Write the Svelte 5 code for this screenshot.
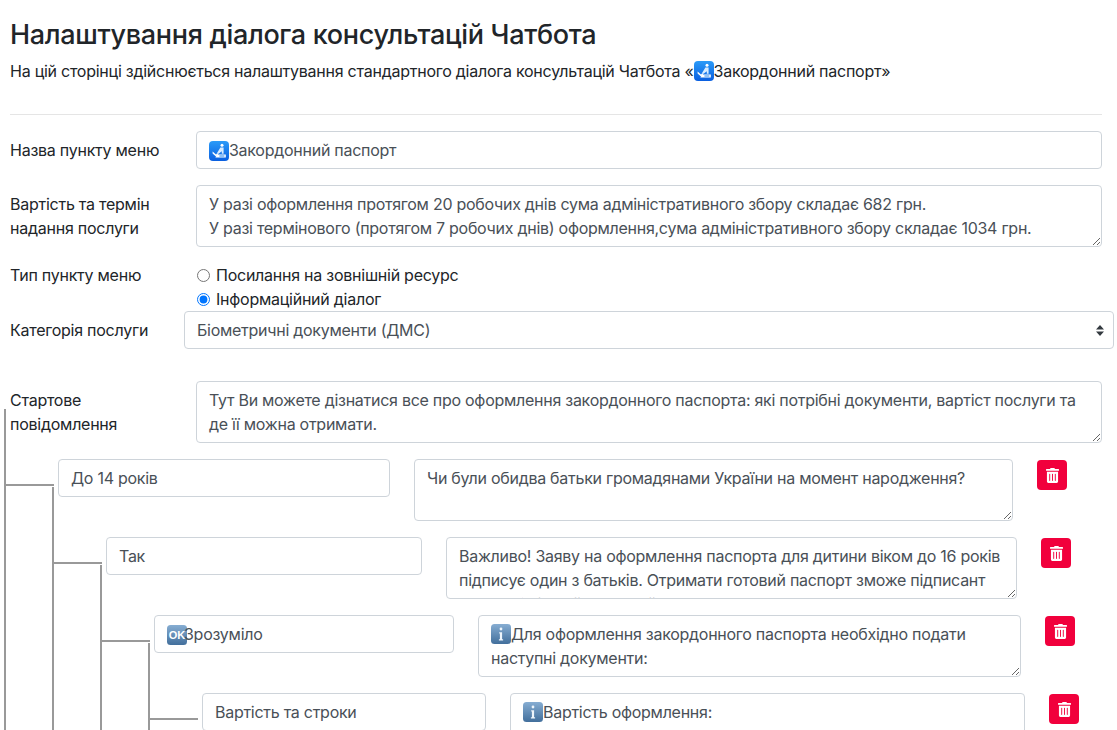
<script lang="ts">
  let menuType = $state('dialog');

  let tree = $state([
    {
      id: 1,
      title: 'До 14 років',
      text: 'Чи були обидва батьки громадянами України на момент народження?',
      children: [
        {
          id: 2,
          title: 'Так',
          text: 'Важливо! Заяву на оформлення паспорта для дитини віком до 16 років підписує один з батьків. Отримати готовий паспорт зможе підписант заяви або інший законний представник дитини.',
          children: [
            {
              id: 3,
              title: 'Зрозуміло',
              titleIcon: 'ok',
              text: 'Для оформлення закордонного паспорта необхідно подати наступні документи:',
              textIcon: 'info',
              children: [
                {
                  id: 4,
                  title: 'Вартість та строки',
                  text: 'Вартість оформлення:',
                  textIcon: 'info',
                  children: []
                }
              ]
            }
          ]
        }
      ]
    }
  ]);

  const priceText =
    'У разі оформлення протягом 20 робочих днів сума адміністративного збору складає 682 грн.\nУ разі термінового (протягом 7 робочих днів) оформлення,сума адміністративного збору складає 1034 грн.';
  const startText =
    'Тут Ви можете дізнатися все про оформлення закордонного паспорта: які потрібні документи, вартіст послуги та де її можна отримати.';

  function dropNode(nodes, id) {
    return nodes
      .filter((n) => n.id !== id)
      .map((n) => ({ ...n, children: dropNode(n.children, id) }));
  }

  function removeNode(id) {
    tree = dropNode(tree, id);
  }
</script>

{#snippet passport(cls)}
  <svg class={cls} viewBox="0 0 20 20" width="20" height="20" aria-hidden="true">
    <defs>
      <linearGradient id="pass-bg" x1="0" y1="0" x2="0" y2="1">
        <stop offset="0" stop-color="#2b9bf8" />
        <stop offset="1" stop-color="#0a5fe0" />
      </linearGradient>
    </defs>
    <rect width="20" height="20" rx="4" fill="url(#pass-bg)" />
    <circle cx="13" cy="4.2" r="1.5" fill="#fff" />
    <path d="M11.4 6.4h3.2v6.4h-1.8v-2.6l-3.2 2.6H7.6z" fill="#d8ecff" />
    <path d="M3.6 10.6l3.4 3 1.2-1.2 1 1-2.2 2.2-3.4-3z" fill="#fff" />
    <path d="M8 13.6h8.8v2.8H6.4z" fill="#fff" />
    <path d="M10.4 14.4h5v1.2h-5z" fill="#4a9bf0" />
  </svg>
{/snippet}

{#snippet badge(kind)}
  <svg class="emoji" viewBox="0 0 20 20" width="20" height="20" aria-hidden="true">
    <defs>
      <linearGradient id="badge-bg" x1="0" y1="0" x2="0" y2="1">
        <stop offset="0" stop-color="#86add2" />
        <stop offset="1" stop-color="#426f9c" />
      </linearGradient>
    </defs>
    <rect width="20" height="20" rx="3.5" fill="url(#badge-bg)" />
    {#if kind === 'ok'}
      <text x="10" y="13.6" class="ok-label" text-anchor="middle">OK</text>
    {:else}
      <circle cx="10" cy="5" r="1.4" fill="#eef5fb" />
      <path d="M8.2 8.2h2.9v7h1v1.4H7.9v-1.4h1V9.6h-.7z" fill="#eef5fb" />
    {/if}
  </svg>
{/snippet}

{#snippet node(item)}
  <div class="node">
    <div class="row">
      <div class="cell-title">
        {#if item.titleIcon}{@render badge(item.titleIcon)}{/if}
        <input class="control" class:icon-ok={item.titleIcon} type="text" value={item.title} />
      </div>
      <div class="cell-text">
        {#if item.textIcon}{@render badge(item.textIcon)}{/if}
        <textarea class="control area" class:indented={item.textIcon} value={item.text}></textarea>
      </div>
      <button class="remove-btn" aria-label="Видалити" onclick={() => removeNode(item.id)}>
        <svg viewBox="0 0 448 512" width="13" height="15" aria-hidden="true">
          <path
            fill="#fff"
            d="M32 464a48 48 0 0 0 48 48h288a48 48 0 0 0 48-48V128H32zm272-256a16 16 0 0 1 32 0v224a16 16 0 0 1-32 0zm-96 0a16 16 0 0 1 32 0v224a16 16 0 0 1-32 0zm-96 0a16 16 0 0 1 32 0v224a16 16 0 0 1-32 0zM432 32H312l-9.4-18.7A24 24 0 0 0 281.1 0H166.8a23.72 23.72 0 0 0-21.4 13.3L136 32H16A16 16 0 0 0 0 48v32a16 16 0 0 0 16 16h416a16 16 0 0 0 16-16V48a16 16 0 0 0-16-16z"
          />
        </svg>
      </button>
    </div>
    {#if item.children.length}
      <div class="children">
        {#each item.children as child (child.id)}
          {@render node(child)}
        {/each}
      </div>
    {/if}
  </div>
{/snippet}

<div class="page">
  <h3>Налаштування діалога консультацій Чатбота</h3>
  <p class="lead">
    На цій сторінці здійснюється налаштування стандартного діалога консультацій Чатбота «{@render passport('inline-emoji')}Закордонний паспорт»
  </p>
  <hr />

  <div class="form-row">
    <label class="form-label" for="menu-name">Назва пункту меню</label>
    <div class="field">
      {@render passport('emoji')}
      <input id="menu-name" class="control with-icon" type="text" value="Закордонний паспорт" />
    </div>
  </div>

  <div class="form-row">
    <label class="form-label" for="price">Вартість та термін надання послуги</label>
    <textarea id="price" class="control area" value={priceText}></textarea>
  </div>

  <div class="form-row tight">
    <span class="form-label flat">Тип пункту меню</span>
    <div class="radios">
      <label><input type="radio" bind:group={menuType} value="link" />Посилання на зовнішній ресурс</label>
      <label><input type="radio" bind:group={menuType} value="dialog" />Інформаційний діалог</label>
    </div>
  </div>

  <div class="form-row select-row">
    <label class="form-label narrow" for="category">Категорія послуги</label>
    <select id="category" class="control picker">
      <option>Біометричні документи (ДМС)</option>
    </select>
  </div>

  <div class="form-row">
    <label class="form-label" for="start">Стартове повідомлення</label>
    <textarea id="start" class="control area" value={startText}></textarea>
  </div>

  <div class="tree">
    {#each tree as item (item.id)}
      {@render node(item)}
    {/each}
  </div>
</div>

<style>
  :global(html) {
    overflow: hidden;
  }

  :global(body) {
    font-family: Inter, 'Liberation Sans', sans-serif;
    color: #212529;
    background: #fff;
  }

  .page {
    padding: 18px 15px 0 10px;
    font-size: 16px;
    line-height: 24px;
    letter-spacing: -0.25px;
  }

  h3 {
    margin: 0 0 7px;
    font-size: 27px;
    line-height: 34px;
    font-weight: 500;
    letter-spacing: -0.32px;
  }

  .lead {
    margin: 0 0 31px;
  }

  .inline-emoji {
    vertical-align: -4px;
  }

  hr {
    margin: 0 0 16px;
    border: 0;
    border-top: 1px solid rgba(0, 0, 0, 0.1);
  }

  .form-row {
    display: flex;
    align-items: flex-start;
    margin-bottom: 16px;
  }

  .form-row.tight {
    margin-bottom: 0;
  }

  .select-row {
    margin-right: -12px;
    margin-bottom: 32px;
    align-items: center;
  }

  .form-label {
    flex: 0 0 186px;
    padding: 7px 20px 0 0;
    box-sizing: border-box;
  }

  .form-label.flat,
  .form-label.narrow {
    padding-top: 0;
  }

  .form-label.narrow {
    flex-basis: 174px;
  }

  .field {
    position: relative;
    flex: 1;
    min-width: 0;
  }

  .control {
    display: block;
    width: 100%;
    box-sizing: border-box;
    padding: 6px 12px;
    border: 1px solid #ced4da;
    border-radius: 4px;
    background: transparent;
    color: #495057;
    font: inherit;
    letter-spacing: -0.27px;
    line-height: 24px;
    height: 38px;
    position: relative;
    z-index: 1;
  }

  .with-icon {
    padding-left: 32px;
  }

  .icon-ok {
    padding-left: 29px;
  }

  .area {
    flex: 1;
    height: 62px;
    min-width: 0;
    scrollbar-width: none;
  }

  .indented {
    text-indent: 20px;
  }

  .picker {
    flex: 1;
    width: auto;
    min-width: 0;
    appearance: none;
    background: #fff
      url("data:image/svg+xml,%3Csvg xmlns='http://www.w3.org/2000/svg' width='8' height='11'%3E%3Cpath d='M4 0l4 4.4H0zM4 11L0 6.6h8z' fill='%23343a40'/%3E%3C/svg%3E")
      no-repeat right 9px center;
  }

  .radios {
    flex: 1;
  }

  .radios label {
    display: flex;
    align-items: center;
    height: 24px;
  }

  .radios input {
    margin: 0 6px 0 1px;
    width: 13px;
    height: 13px;
  }

  .emoji {
    position: absolute;
    left: 13px;
    top: 10px;
    z-index: 0;
  }

  .cell-text .emoji {
    top: 9px;
  }

  .ok-label {
    font-family: 'Liberation Sans', sans-serif;
    font-size: 11px;
    font-weight: 700;
    letter-spacing: 0;
    fill: #fff;
  }

  .tree {
    position: relative;
    margin: 0 35px 0 48px;
  }

  .tree::before,
  .children::before {
    content: '';
    position: absolute;
    left: -54px;
    top: -50px;
    bottom: 0;
    width: 2px;
    background: #999;
  }

  .node {
    position: relative;
  }

  .node::before {
    content: '';
    position: absolute;
    left: -52px;
    top: 25px;
    width: 48px;
    height: 2px;
    background: #999;
  }

  .row {
    display: flex;
    align-items: flex-start;
    gap: 24px;
    margin-bottom: 16px;
  }

  .cell-title {
    position: relative;
    flex: 4 1 0;
    min-width: 0;
  }

  .cell-text {
    position: relative;
    display: flex;
    flex: 7 1 18px;
    min-width: 0;
  }

  .children {
    position: relative;
    margin: 0 -4px 0 48px;
  }

  .remove-btn {
    flex: 0 0 30px;
    display: flex;
    align-items: center;
    justify-content: center;
    width: 30px;
    height: 30px;
    margin-top: 1px;
    padding: 0;
    border: 0;
    border-radius: 4px;
    background: #f1003c;
    cursor: pointer;
  }
</style>
